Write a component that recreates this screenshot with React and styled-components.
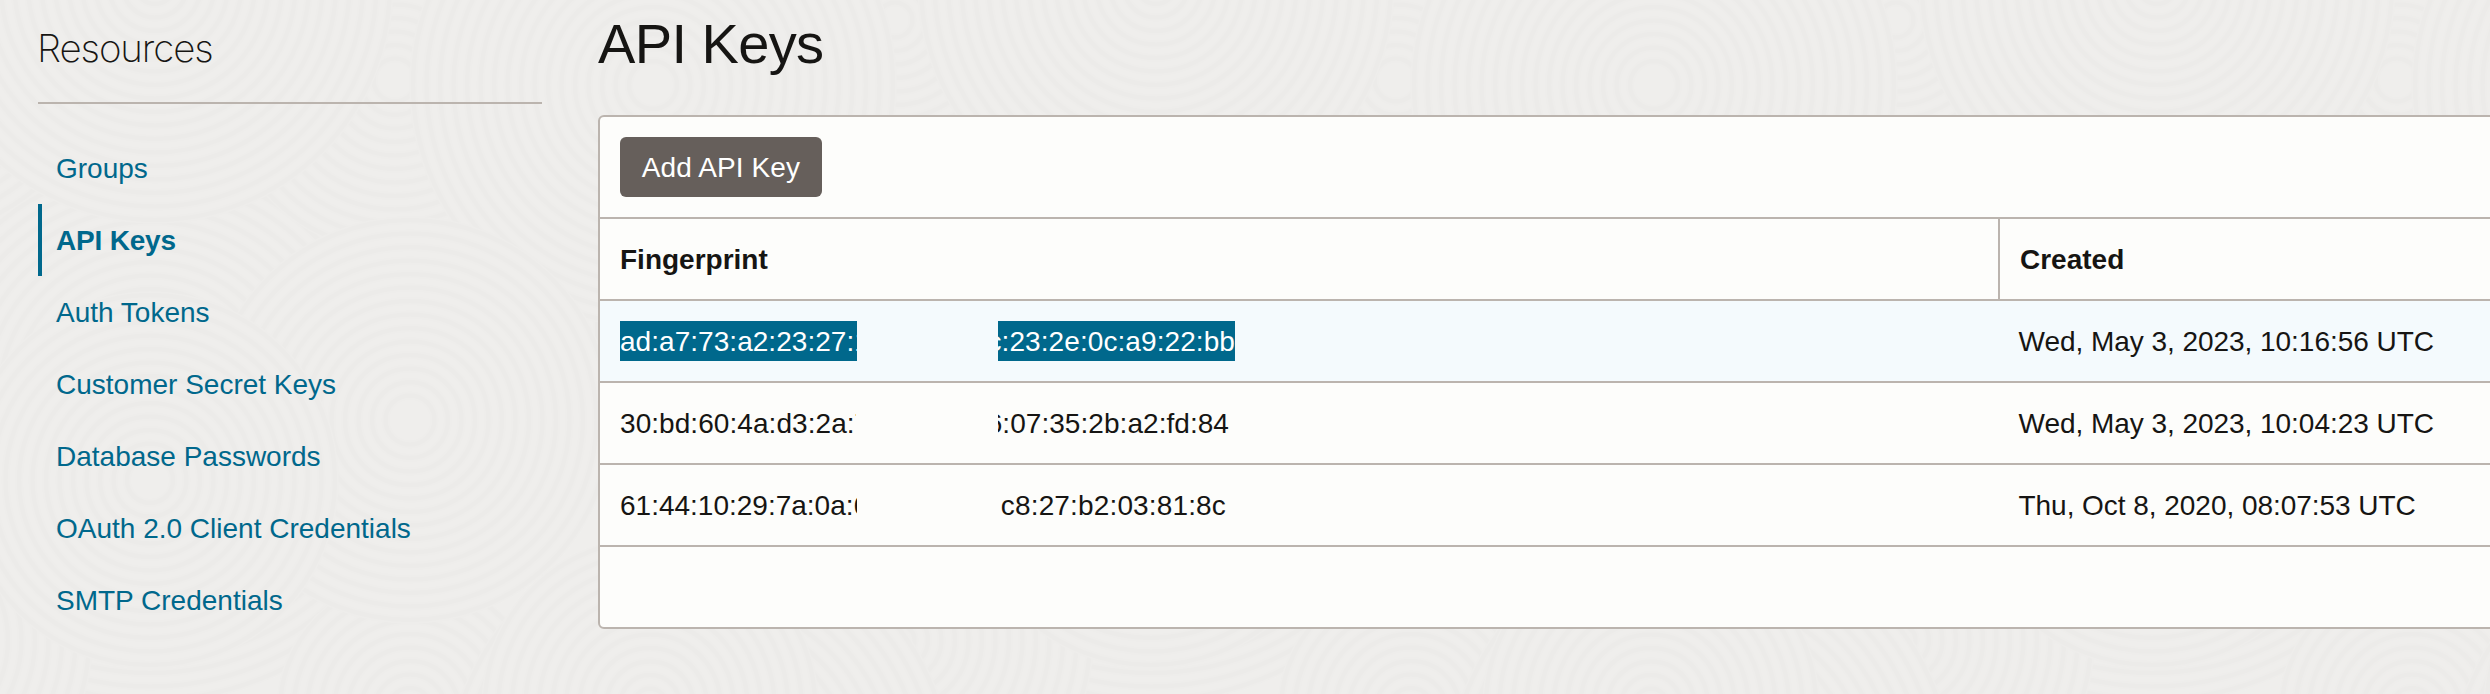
import React from "react";
import styled, { createGlobalStyle, css } from "styled-components";

const ink = "#161513";
const teal = "#00688c";
const line = "#bbb4ae";
const panel = "#fdfdfb";

const GlobalStyle = createGlobalStyle`
  * { box-sizing: border-box; }
  html, body { margin: 0; background: #efeeec; }
  body {
    overflow: hidden;
    color: ${ink};
    font-family: "Liberation Sans", Arial, sans-serif;
    font-size: 28px;
    line-height: 40px;
  }
`;

const Page = styled.div`
  position: relative;
  display: flex;
  align-items: flex-start;
  height: 694px;
  overflow: hidden;
`;

const Backdrop = styled.svg`
  position: absolute;
  inset: 0;
  width: 100%;
  height: 100%;
`;

const Sidebar = styled.aside`
  position: relative;
  flex: none;
  width: 504px;
  margin: 0 56px 0 38px;
`;

const SidebarTitle = styled.h2`
  margin: 0;
  height: 104px;
  padding-top: 24px;
  border-bottom: 2px solid ${line};
  font-family: Inter, "Liberation Sans", sans-serif;
  font-size: 38.5px;
  font-weight: 150;
  line-height: 48px;
  letter-spacing: -1.1px;
  text-indent: -1px;
`;

const Menu = styled.nav`
  display: flex;
  flex-direction: column;
  padding-top: 28px;
`;

const MenuItem = styled.a`
  display: flex;
  align-items: center;
  height: 72px;
  padding: 2px 0 0 14px;
  border-left: 4px solid transparent;
  color: ${teal};
  text-decoration: none;
  ${(p) =>
    p.$active &&
    css`
      border-left-color: ${teal};
      font-weight: 700;
      letter-spacing: -0.2px;
    `}
`;

const Main = styled.main`
  position: relative;
  flex: none;
  width: 1920px;
`;

const Title = styled.h1`
  margin: 0;
  height: 115px;
  padding-top: 12px;
  font-size: 56px;
  font-weight: 400;
  line-height: 64px;
  letter-spacing: -0.6px;
`;

const Panel = styled.section`
  height: 514px;
  border: 2px solid ${line};
  border-radius: 6px;
  background: ${panel};
  overflow: hidden;
`;

const Toolbar = styled.div`
  display: flex;
  align-items: center;
  height: 102px;
  padding: 0 20px;
  border-bottom: 2px solid ${line};
`;

const Button = styled.button`
  width: 202px;
  height: 60px;
  padding: 2px 0 0;
  border: 0;
  border-radius: 6px;
  background: #665f5b;
  color: #fff;
  font: inherit;
  letter-spacing: 0.1px;
`;

const Row = styled.div`
  display: grid;
  grid-template-columns: 1400px 1fr;
  height: 82px;
  border-bottom: 2px solid ${line};
  background: ${(p) => (p.$selected ? "#f4fafd" : "transparent")};
`;

const Cell = styled.div`
  display: flex;
  align-items: center;
  padding: 0 20px;
  white-space: nowrap;
`;

const DateCell = styled(Cell)`
  padding: 2px 0 0 18.5px;
  letter-spacing: -0.04px;
`;

const HeadCell = styled(Cell)`
  padding-top: 2px;
  font-weight: 700;
  & + & {
    border-left: 2px solid ${line};
  }
`;

const HeadRow = styled(Row)`
  grid-template-columns: 1398px 1fr;
`;

const Fragment = styled.span`
  display: flex;
  flex: none;
  justify-content: ${(p) => (p.$end ? "flex-end" : "flex-start")};
  width: ${(p) => p.$width}px;
  height: 40px;
  margin-left: ${(p) => (p.$end ? 998 - 620 - p.$offset : 0)}px;
  overflow: hidden;
  line-height: 42px;
  letter-spacing: ${(p) => p.$spacing ?? 0}px;
  ${(p) =>
    p.$selected &&
    css`
      background: ${teal};
      color: #fff;
    `}
`;

const MENU = [
  { label: "Groups" },
  { label: "API Keys", active: true },
  { label: "Auth Tokens" },
  { label: "Customer Secret Keys" },
  { label: "Database Passwords" },
  { label: "OAuth 2.0 Client Credentials" },
  { label: "SMTP Credentials" },
];

const KEYS = [
  {
    start: { text: "ad:a7:73:a2:23:27:1", width: 237, spacing: 0.04 },
    end: { text: "c:23:2e:0c:a9:22:bb", width: 237, spacing: 0.08 },
    created: "Wed, May 3, 2023, 10:16:56 UTC",
    selected: true,
  },
  {
    start: { text: "30:bd:60:4a:d3:2a:7", width: 236, spacing: 0.06 },
    end: { text: "6:07:35:2b:a2:fd:84", width: 231, spacing: 0.05 },
    created: "Wed, May 3, 2023, 10:04:23 UTC",
  },
  {
    start: { text: "61:44:10:29:7a:0a:6", width: 237 },
    end: { text: "c8:27:b2:03:81:8c", width: 228, spacing: 0.15 },
    created: "Thu, Oct 8, 2020, 08:07:53 UTC",
  },
];

// Overlapping groups of rings; later groups cover the earlier ones.
const RINGS = [
  [900, 330, 330],
  [150, 400, 300],
  [895, 20, 220],
  [395, 80, 170],
  [653, 85, 240],
  [155, -15, 235],
  [410, 710, 130],
  [900, 640, 190],
  [700, 780, 250],
  [410, 420, 200],
  [150, 480, 185],
  [650, 705, 165],
];

const RING_GAP = 13.5;

function Waves() {
  return (
    <Backdrop aria-hidden="true">
      <defs>
        <pattern id="waves" width="1001" height="694" patternUnits="userSpaceOnUse">
          {RINGS.map(([cx, cy, r]) =>
            [-1001, 0, 1001].map((dx) => (
              <g key={`${cx}-${cy}-${dx}`}>
                <circle cx={cx + dx} cy={cy} r={r} fill="#efeeec" />
                {Array.from({ length: Math.floor(r / RING_GAP) }, (_, i) => (
                  <g key={i} fill="none">
                    <circle cx={cx + dx} cy={cy} r={r - i * RING_GAP} stroke="#eeedeb" strokeWidth="7.5" />
                    <circle cx={cx + dx} cy={cy} r={r - i * RING_GAP} stroke="#ecebe9" strokeWidth="4" />
                  </g>
                ))}
              </g>
            ))
          )}
        </pattern>
      </defs>
      <rect width="100%" height="100%" fill="url(#waves)" />
    </Backdrop>
  );
}

export default function App() {
  return (
    <>
      <GlobalStyle />
      <Page>
        <Waves />
        <Sidebar>
          <SidebarTitle>Resources</SidebarTitle>
          <Menu>
            {MENU.map((item) => (
              <MenuItem key={item.label} $active={item.active}>
                {item.label}
              </MenuItem>
            ))}
          </Menu>
        </Sidebar>
        <Main>
          <Title>API Keys</Title>
          <Panel>
            <Toolbar>
              <Button>Add API Key</Button>
            </Toolbar>
            <HeadRow>
              <HeadCell>Fingerprint</HeadCell>
              <HeadCell>Created</HeadCell>
            </HeadRow>
            {KEYS.map(({ start, end, created, selected }) => (
              <Row key={start.text} $selected={selected}>
                <Cell>
                  <Fragment $width={start.width} $spacing={start.spacing} $selected={selected}>
                    {start.text}
                  </Fragment>
                  <Fragment
                    $end
                    $offset={start.width}
                    $width={end.width}
                    $spacing={end.spacing}
                    $selected={selected}
                  >
                    {end.text}
                  </Fragment>
                </Cell>
                <DateCell>{created}</DateCell>
              </Row>
            ))}
          </Panel>
        </Main>
      </Page>
    </>
  );
}
